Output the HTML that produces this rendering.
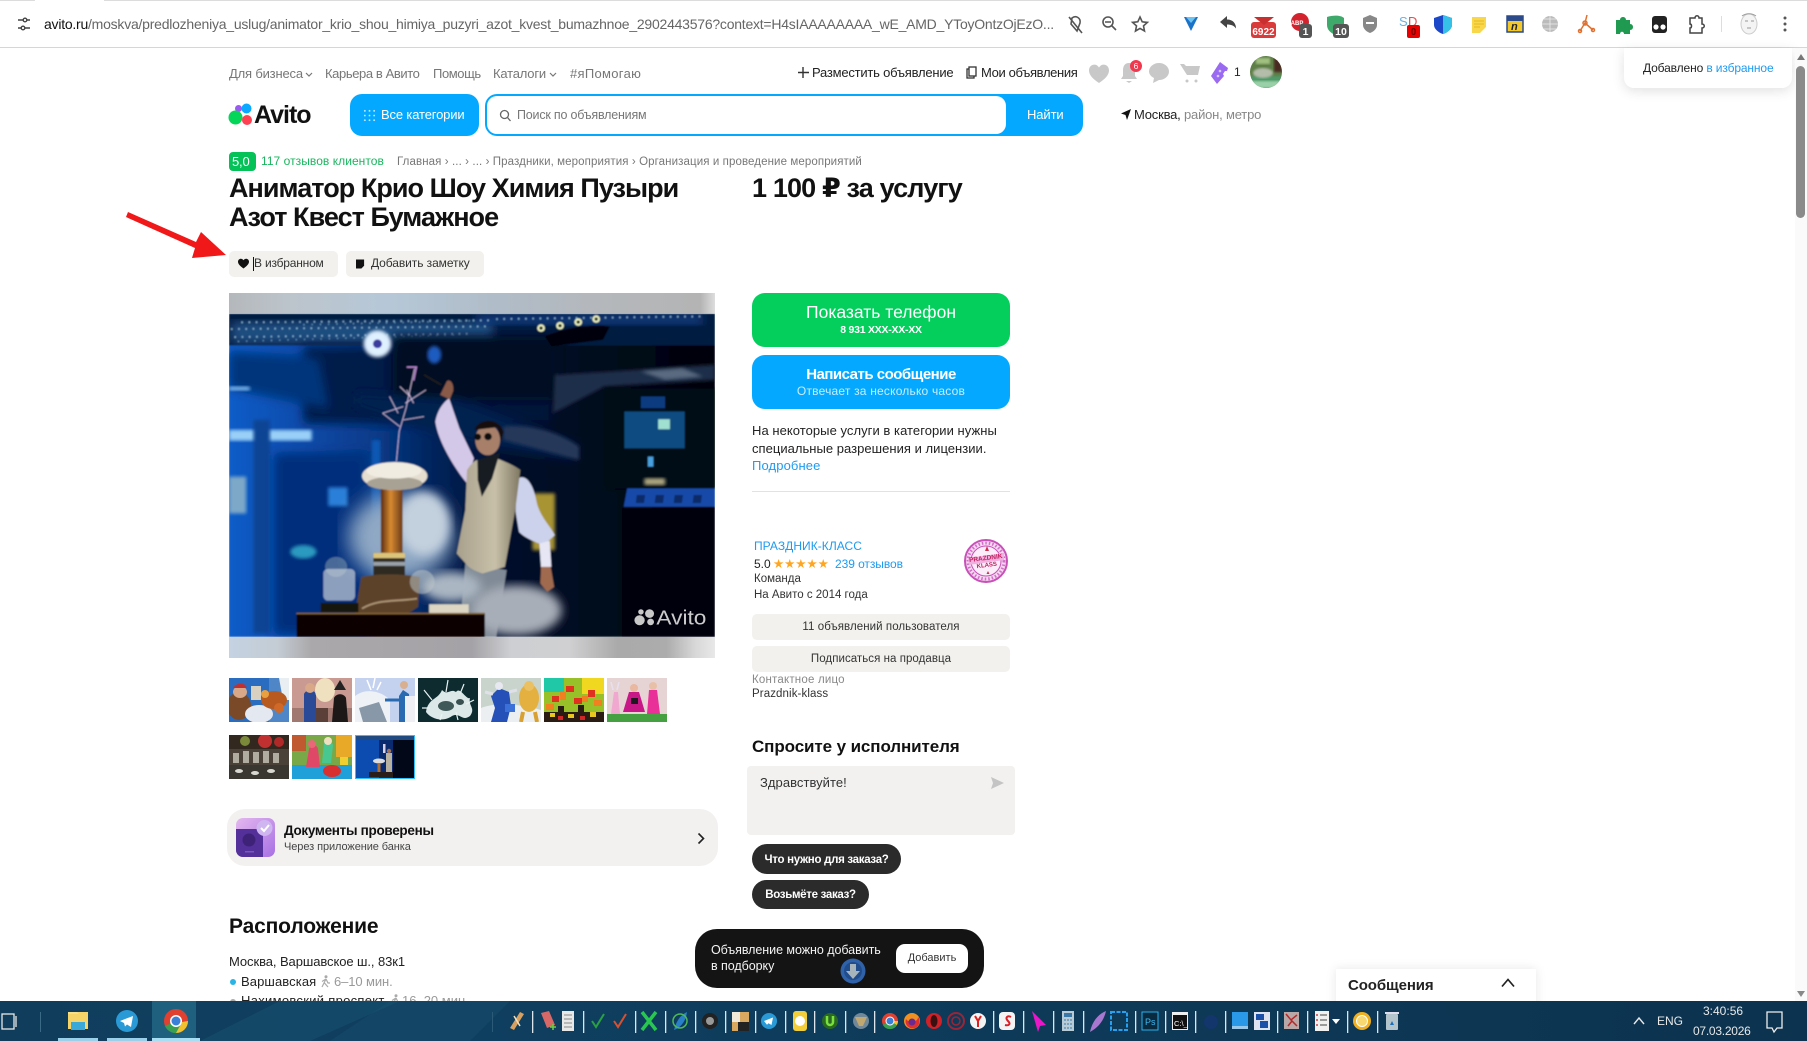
<!DOCTYPE html>
<html lang="ru"><head><meta charset="utf-8"><title>Аниматор Крио Шоу</title>
<style>
html,body{margin:0;padding:0;background:#fff}
body{width:1807px;height:1041px;position:relative;overflow:hidden;font-family:"Liberation Sans","DejaVu Sans",sans-serif;color:#222}
.t{position:absolute;white-space:nowrap;line-height:20px;font-size:13px}
.b{position:absolute}
.g{color:#777}
.lnk{color:#1e9bf0}
svg{position:absolute;overflow:visible}
.th{position:absolute;width:60px;height:44px;overflow:hidden}
</style></head><body>

<!-- browser chrome -->
<div class="b" style="left:0;top:0;width:1807px;height:47px;background:#fff;border-bottom:1px solid #d6d6d6"></div>
<div class="b" style="left:0;top:0;width:1807px;height:1px;background:#dcdcdc"></div>
<div class="b" style="left:35px;top:0;width:69px;height:1px;background:#fff"></div>
<div class="t" style="left:44px;top:14px;font-size:14px;color:#666;letter-spacing:-.235px"><span style="color:#111">avito.ru</span>/moskva/predlozheniya_uslug/animator_krio_shou_himiya_puzyri_azot_kvest_bumazhnoe_2902443576?context=H4sIAAAAAAAA_wE_AMD_YToyOntzOjEzO...</div>
<svg style="left:0;top:0" width="1807" height="48" viewBox="0 0 1807 48">
 <g stroke="#444" stroke-width="1.400" fill="none"><path d="M18 20h5M27 20h3M18 28h3M25 28h5"/><circle cx="25" cy="20" r="1.800"/><circle cx="23" cy="28" r="1.800"/></g>
 <g stroke="#555" stroke-width="1.600" fill="none"><path d="M1072 18c4-3 9 0 8 5l-3 8-6-7zM1069 17l13 16"/><circle cx="1108" cy="22" r="5"/><path d="M1112 26l4 4M1105 22h6"/><path d="M1140 17l2.200 4.800 5.200.6-3.900 3.500 1 5.100-4.500-2.600-4.500 2.600 1-5.100-3.900-3.500 5.200-.6z"/></g>
 <path d="M1184 17h14l-7 14z" fill="#1a73c8"/><path d="M1186 17h10l-5 6z" fill="#6cc3ef"/>
 <path d="M1220 22l7-6v3.500c6 0 9 4 9 9-2-3-5-4-9-4v3.500z" fill="#444"/>
 <rect x="1251" y="22" width="25" height="16" rx="3" fill="#d93a3a"/><path d="M1254 17h20l-10 8z" fill="#c83030"/>
 <text x="1263.500" y="35" font-size="10" font-weight="bold" fill="#fff" text-anchor="middle" font-family="Liberation Sans">6922</text>
 <circle cx="1300" cy="22" r="9" fill="#d2232f"/><text x="1297" y="25" font-size="6" font-weight="bold" fill="#fff" text-anchor="middle" font-family="Liberation Sans">ABP</text><rect x="1299" y="24" width="13" height="14" rx="3" fill="#555"/>
 <text x="1305.500" y="35" font-size="10.500" font-weight="bold" fill="#fff" text-anchor="middle" font-family="Liberation Sans">1</text>
 <path d="M1327 17c6-2 14-2 17 1v8c0 5-6 8-9 9-4-2-8-5-8-10z" fill="#3fa96b"/><rect x="1333" y="24" width="16" height="14" rx="3" fill="#555"/>
 <text x="1341" y="35" font-size="10.500" font-weight="bold" fill="#fff" text-anchor="middle" font-family="Liberation Sans">10</text>
 <path d="M1370 15l7 3v7c0 4-4 7-7 8-3-1-7-4-7-8v-7z" fill="#888"/><rect x="1366" y="22" width="8" height="2" fill="#fff"/>
 <text x="1399" y="26" font-size="13" fill="#6bb0df" font-family="Liberation Sans">S</text><text x="1408" y="26" font-size="13" fill="#e05050" font-family="Liberation Sans">D</text><rect x="1407" y="25" width="13" height="13" rx="2" fill="#e80000"/>
 <text x="1413.500" y="35" font-size="10" font-weight="bold" fill="#600" text-anchor="middle" font-family="Liberation Sans">0</text>
 <path d="M1443 15l9 3v7c0 4-5 8-9 9-4-1-9-5-9-9v-7z" fill="#1a48c8"/><path d="M1443 15l9 3v7c0 4-5 8-9 9z" fill="#35c0e8"/>
 <path d="M1472 17h14v10l-6 6h-8z" fill="#f8d84a"/><path d="M1474 21h10M1474 24h10M1474 27h6" stroke="#e8b820"/>
 <rect x="1507" y="16" width="16" height="16" fill="#f2c82a" stroke="#2c4a8a" stroke-width="1.500"/><rect x="1507" y="16" width="16" height="5" fill="#2c4a8a"/><text x="1511" y="30" font-size="11" font-style="italic" font-weight="bold" fill="#223" font-family="Liberation Sans">n</text>
 <circle cx="1550" cy="24" r="8" fill="#bbb"/><path d="M1542 24h16M1550 16v16M1544 19h12M1544 29h12" stroke="#eee" stroke-width=".8"/>
 <g stroke="#e07030" stroke-width="1.500" fill="none"><path d="M1587 15l-2 8-5 8M1585 23l8 7"/><circle cx="1585" cy="23" r="2"/><circle cx="1580" cy="31" r="1.500"/><circle cx="1593" cy="30" r="1.500"/></g>
 <path d="M1616 20h4c0-4 6-4 6 0h4v4c4 0 4 6 0 6v4h-6c0-3-4-3-4 0h-4z" fill="#1f9a50"/>
 <rect x="1652" y="16" width="15" height="17" rx="3" fill="#222"/><circle cx="1656" cy="27" r="2.600" fill="#fff"/><circle cx="1663" cy="27" r="2.600" fill="#fff"/>
 <path d="M1690 18h5c0-3 4-3 4 0h3v6c3 0 3 4 0 4v5h-12v-5c2 0 2-4 0-4z" fill="none" stroke="#444" stroke-width="1.500"/>
 <rect x="1721" y="16" width="1" height="16" fill="#ddd"/>
 <ellipse cx="1749" cy="24" rx="8" ry="10" fill="#f4f4f4" stroke="#ccc"/><path d="M1745 21h3M1751 21h3M1747 28h4M1742 16c4-3 10-3 14 0" stroke="#999" fill="none"/>
 <g fill="#555"><circle cx="1785" cy="18" r="1.500"/><circle cx="1785" cy="24" r="1.500"/><circle cx="1785" cy="30" r="1.500"/></g>
</svg>

<!-- top nav -->
<div class="t g" style="left:229px;top:64px;letter-spacing:-.18px">Для бизнеса</div>
<div class="t g" style="left:325px;top:64px;letter-spacing:-.4px">Карьера в Авито</div>
<div class="t g" style="left:433px;top:64px;letter-spacing:-.4px">Помощь</div>
<div class="t g" style="left:493px;top:64px;letter-spacing:-.2px">Каталоги</div>
<div class="t g" style="left:570px;top:64px;letter-spacing:.3px">#яПомогаю</div>
<div class="t" style="left:812px;top:63px;letter-spacing:-.22px">Разместить объявление</div>
<div class="t" style="left:981px;top:63px;letter-spacing:-.35px">Мои объявления</div>
<svg style="left:0;top:48px" width="1807" height="60" viewBox="0 48 1807 60">
 <path d="M306 73l3 3 3-3M550 73l3 3 3-3" stroke="#777" fill="none" stroke-width="1.200"/>
 <path d="M803 67v11M798 72.500h11" stroke="#333" stroke-width="1.400"/>
 <rect x="967" y="69" width="7" height="9" fill="none" stroke="#333" stroke-width="1.300"/><rect x="969" y="67" width="7" height="9" fill="#fff" stroke="#333" stroke-width="1.300"/>
 <path d="M1099 83c-6-4-10-8-10-12.500 0-6 7-8 10-3 3-5 10-3 10 3 0 4.500-4 8.500-10 12.500z" fill="#c8c8c8"/>
 <path d="M1129 63c4 0 6 3 6 7v6l2 3h-16l2-3v-6c0-4 2-7 6-7zM1126 81h6l-3 2z" fill="#c8c8c8"/><circle cx="1136" cy="66" r="6" fill="#f0384e"/>
 <text x="1136" y="69" font-size="8.500" fill="#fff" text-anchor="middle" font-family="Liberation Sans">6</text>
 <path d="M1159 63c5.500 0 10 3.800 10 8.500s-4.500 8.500-10 8.500l-6 3 1-5c-3-1.500-5-4-5-6.500 0-4.700 4.500-8.500 10-8.500z" fill="#c8c8c8"/>
 <path d="M1180 64h4l2 2h14l-2 9h-11z" fill="#c8c8c8"/><circle cx="1187" cy="81" r="1.500" fill="#c8c8c8"/><circle cx="1196" cy="81" r="1.500" fill="#c8c8c8"/>
 <path d="M1211 76l9-14 8 6-1 3-2 0-2 3 1 2-7 8z" fill="#9a6af0"/><circle cx="1220" cy="71" r="1.300" fill="#d8c8ff"/><circle cx="1218" cy="76" r="1.300" fill="#d8c8ff"/>
</svg>
<div class="t" style="left:1234px;top:62px;font-size:12px">1</div>
<svg style="left:1250px;top:56px" width="32" height="32" viewBox="0 0 32 32"><defs><clipPath id="av"><circle cx="16" cy="16" r="16"/></clipPath><filter id="bl1"><feGaussianBlur stdDeviation="1"/></filter></defs><g clip-path="url(#av)"><rect width="32" height="32" fill="#5e7f48"/><rect x="0" y="20" width="32" height="12" fill="#4f9a68" filter="url(#bl1)"/><ellipse cx="13" cy="17" rx="10" ry="5" fill="#b4bcaa" filter="url(#bl1)"/><rect x="24" y="0" width="8" height="16" fill="#4a2c22" filter="url(#bl1)"/><rect x="0" y="25" width="32" height="7" fill="#9ad0a8" filter="url(#bl1)"/><rect x="6" y="2" width="14" height="6" fill="#a0c080" filter="url(#bl1)"/></g></svg>

<!-- tooltip -->
<div class="b" style="left:1624px;top:48px;width:168px;height:40px;background:#fff;border-radius:0 0 10px 10px;box-shadow:0 3px 12px rgba(0,0,0,.12)"></div>
<div class="t" style="left:1643px;top:58px;font-size:12px;letter-spacing:-.13px">Добавлено <span class="lnk">в избранное</span></div>

<!-- scrollbar -->
<div class="b" style="left:1795px;top:48px;width:12px;height:953px;background:#fafafa"></div>
<div class="b" style="left:1796px;top:66px;width:9px;height:152px;background:#8a8a8a;border-radius:5px"></div>
<svg style="left:1795px;top:48px" width="12" height="953" viewBox="0 0 12 953"><path d="M6 6l4 6H2z" fill="#777"/><path d="M6 949l4-6H2z" fill="#888"/></svg>

<!-- logo + search -->
<svg style="left:229px;top:103px" width="26" height="24" viewBox="229 103 26 24"><circle cx="238.500" cy="108.500" r="3.500" fill="#9a5cf0"/><circle cx="246.500" cy="108.500" r="5" fill="#0aa8ff"/><circle cx="235.500" cy="117.500" r="7" fill="#04d65a"/><circle cx="247" cy="120" r="5" fill="#ff4053"/></svg>
<div class="t" style="left:254px;top:105px;font-size:25px;font-weight:bold;color:#111;letter-spacing:-1px">Avito</div>
<div class="b" style="left:350px;top:94px;width:129px;height:42px;background:#04a9ff;border-radius:12px"></div>
<svg style="left:363px;top:109px" width="13" height="13" viewBox="0 0 14 14"><g fill="#bfe8ff"><circle cx="2" cy="2" r="1"/><circle cx="7" cy="2" r="1"/><circle cx="12" cy="2" r="1"/><circle cx="2" cy="7" r="1"/><circle cx="7" cy="7" r="1"/><circle cx="12" cy="7" r="1"/><circle cx="2" cy="12" r="1"/><circle cx="7" cy="12" r="1"/><circle cx="12" cy="12" r="1"/></g></svg>
<div class="t" style="left:381px;top:105px;color:#fff;letter-spacing:-.15px">Все категории</div>
<div class="b" style="left:485px;top:94px;width:598px;height:42px;background:#04a9ff;border-radius:12px"></div>
<div class="b" style="left:487px;top:96px;width:519px;height:38px;background:#fff;border-radius:10px"></div>
<svg style="left:499px;top:109px" width="12" height="13" viewBox="0 0 12 13"><circle cx="5.500" cy="5.500" r="4" stroke="#666" stroke-width="1.300" fill="none"/><path d="M8.500 8.500l3 3.500" stroke="#666" stroke-width="1.300"/></svg>
<div class="t g" style="left:517px;top:105px;letter-spacing:-.2px;font-size:12.500px">Поиск по объявлениям</div>
<div class="t" style="left:1027px;top:105px;color:#fff;letter-spacing:-.1px">Найти</div>
<svg style="left:1121px;top:109px" width="10" height="11" viewBox="0 0 10 11"><path d="M10 0L0 4.500l4.500 1.500L6 11z" fill="#111"/></svg>
<div class="t" style="left:1134px;top:105px;color:#888;letter-spacing:-.2px"><span style="color:#222">Москва,</span> район, метро</div>

<!-- rating + breadcrumbs -->
<div class="b" style="left:229px;top:152px;width:27px;height:19px;background:#04c258;border-radius:4px"></div>
<div class="t" style="left:232px;top:152px;color:#fff;font-size:13px;letter-spacing:-.2px">5,0</div>
<div class="t" style="left:261px;top:151px;color:#1bb45f;font-size:12px;letter-spacing:.05px">117 отзывов клиентов</div>
<div class="t" style="left:397px;top:152px;color:#777;font-size:11.500px;letter-spacing:.1px">Главная › ... › ... › Праздники, мероприятия › Организация и проведение мероприятий</div>

<!-- title -->
<div class="t" style="left:229px;top:178px;font-size:27px;font-weight:bold;color:#111;letter-spacing:-.95px">Аниматор Крио Шоу Химия Пузыри</div>
<div class="t" style="left:229px;top:207px;font-size:27px;font-weight:bold;color:#111;letter-spacing:-.95px">Азот Квест Бумажное</div>
<div class="t" style="left:752px;top:178px;font-size:27px;font-weight:bold;color:#111;letter-spacing:-.85px">1 100 ₽ за услугу</div>

<!-- red arrow -->
<svg style="left:120px;top:205px" width="120" height="60" viewBox="120 205 120 60"><path d="M128 212l68 30 5-10 25 23-34 3 3-10-69-31z" fill="#f01818"/></svg>

<!-- fav / note -->
<div class="b" style="left:229px;top:251px;width:109px;height:26px;background:#f2f1ed;border-radius:5px"></div>
<div class="b" style="left:346px;top:251px;width:138px;height:26px;background:#f2f1ed;border-radius:5px"></div>
<svg style="left:238px;top:258px" width="11" height="11" viewBox="0 0 12 12"><path d="M6 11.500C2 8.500 0 6.500 0 4c0-3 4-4.500 6-1.500C8-.5 12 1 12 4c0 2.500-2 4.500-6 7.500z" fill="#111"/></svg>
<div class="b" style="left:253px;top:257px;width:1px;height:14px;background:#111"></div>
<div class="t" style="left:254px;top:253px;font-size:12px;color:#333;letter-spacing:-.2px">В избранном</div>
<svg style="left:356px;top:258px" width="9" height="11" viewBox="0 0 10 11"><path d="M0 1h9v7l-3 3H0z" fill="#111"/></svg>
<div class="t" style="left:371px;top:253px;font-size:12px;color:#333;letter-spacing:-.08px">Добавить заметку</div>

<!-- main photo -->
<svg style="left:229px;top:293px" width="486" height="365" viewBox="84 40 1411 1093" preserveAspectRatio="none">
<defs>
 <linearGradient id="tb" x1="0" x2="1"><stop offset="0" stop-color="#b4b8bb"/><stop offset=".12" stop-color="#bcc4cb"/><stop offset=".32" stop-color="#b6c8d8"/><stop offset=".55" stop-color="#b0bcc8"/><stop offset=".75" stop-color="#b4b8bc"/><stop offset=".97" stop-color="#b4b4b4"/><stop offset="1" stop-color="#ddd"/></linearGradient>
 <linearGradient id="bb" x1="0" x2="1"><stop offset="0" stop-color="#c4d2e2"/><stop offset=".1" stop-color="#c4ccd4"/><stop offset=".17" stop-color="#aaa8aa"/><stop offset=".5" stop-color="#a4a2a6"/><stop offset=".58" stop-color="#cdcfd2"/><stop offset=".7" stop-color="#d0d0d2"/><stop offset=".8" stop-color="#aaaaaa"/><stop offset=".9" stop-color="#acacac"/><stop offset=".96" stop-color="#d8d8d8"/><stop offset="1" stop-color="#e8e8e8"/></linearGradient>
 <linearGradient id="pb" x1="0" x2="1"><stop offset="0" stop-color="#0a5cc8"/><stop offset=".16" stop-color="#0a4aa8"/><stop offset=".3" stop-color="#073a88"/><stop offset=".42" stop-color="#04245c"/><stop offset=".58" stop-color="#020e2a"/><stop offset="1" stop-color="#01030a"/></linearGradient>
 <linearGradient id="col" x1="0" x2="1"><stop offset="0" stop-color="#5a2c10"/><stop offset=".45" stop-color="#d88a30"/><stop offset="1" stop-color="#6a3a18"/></linearGradient>
 <linearGradient id="vest" x1="0" x2="1"><stop offset="0" stop-color="#a8a08c"/><stop offset=".6" stop-color="#c8c0a8"/><stop offset="1" stop-color="#7f7862"/></linearGradient>
 <filter id="f4"><feGaussianBlur stdDeviation="5"/></filter>
 <filter id="f12"><feGaussianBlur stdDeviation="14"/></filter>
 <filter id="f30"><feGaussianBlur stdDeviation="30"/></filter>
 <filter id="f2"><feGaussianBlur stdDeviation="2.200"/></filter>
 <clipPath id="pc"><rect x="84" y="102" width="1411" height="968"/></clipPath>
</defs>
<rect x="84" y="40" width="1411" height="62" fill="url(#tb)"/>
<rect x="84" y="1070" width="1411" height="63" fill="url(#bb)"/>
<g clip-path="url(#pc)">
 <g filter="url(#f2)">
 <rect x="84" y="102" width="1411" height="968" fill="url(#pb)"/>
 <!-- ceiling -->
 <rect x="84" y="102" width="1411" height="95" fill="#041a40"/>
 <rect x="90" y="125" width="760" height="65" fill="#1b4d80" filter="url(#f12)"/>
 <rect x="800" y="105" width="660" height="30" fill="#0c3e80" filter="url(#f12)"/>
 <path d="M90 148l740-8M100 172l680-10M120 128l720-6M860 118l600-8" stroke="#8fc0e0" stroke-width="5" stroke-dasharray="4 17"/>
 <path d="M110 185l640-20M300 135l500-12" stroke="#6fa8d0" stroke-width="4" stroke-dasharray="3 21"/>
 <!-- dark soffit -->
 <rect x="300" y="200" width="720" height="230" fill="#03183c" opacity=".85" filter="url(#f12)"/>
 <path d="M84 215l260 20 30 150-290-60z" fill="#05357c" filter="url(#f12)"/>
 <rect x="560" y="170" width="480" height="190" fill="#020d24" filter="url(#f12)"/>
 <path d="M450 340l300 20 340 130v50l-300-50-340-110z" fill="#04224f" filter="url(#f12)"/>
 <!-- ceiling lights -->
 <circle cx="515" cy="192" r="40" fill="#dff0ff" filter="url(#f4)"/><circle cx="515" cy="192" r="13" fill="#3a3aa0"/>
 <g fill="#eef4c0"><circle cx="990" cy="145" r="11"/><circle cx="1045" cy="138" r="11"/><circle cx="1098" cy="127" r="11"/><circle cx="1150" cy="118" r="11"/></g>
 <g fill="#101010"><circle cx="990" cy="145" r="5"/><circle cx="1045" cy="138" r="5"/><circle cx="1098" cy="127" r="5"/><circle cx="1150" cy="118" r="5"/></g>
 <path d="M1000 170c40-20 130-40 190-30l-20 40-150 20z" fill="#020610"/>
 <ellipse cx="680" cy="225" rx="20" ry="26" fill="#1a5cc0" filter="url(#f4)"/>
 <!-- left room -->
 <rect x="84" y="320" width="60" height="12" fill="#7ab8f0" filter="url(#f4)"/>
 <rect x="84" y="450" width="240" height="32" fill="#9ad0f8" filter="url(#f4)"/>
 <rect x="155" y="420" width="48" height="640" fill="#0a4494" filter="url(#f4)"/>
 <rect x="215" y="520" width="270" height="540" fill="#062f7c" filter="url(#f12)"/>
 <rect x="84" y="590" width="50" height="110" fill="#7ea8c8" filter="url(#f4)"/>
 <rect x="372" y="622" width="56" height="56" fill="#2a80d8" filter="url(#f4)"/>
 <rect x="498" y="480" width="26" height="500" fill="#0c58b4" filter="url(#f4)"/>
 <ellipse cx="300" cy="815" rx="38" ry="20" fill="#2a9ac0" filter="url(#f4)"/>
 <!-- right room -->
 <path d="M1030 285l465-30v45l-320 20-150 80z" fill="#1e2e48" filter="url(#f4)"/>
 <path d="M1280 275l120-10 60 25-110 10z" fill="#5a6a80" filter="url(#f4)"/>
 <rect x="1170" y="325" width="325" height="300" fill="#040a18" filter="url(#f4)"/>
 <rect x="1232" y="395" width="175" height="110" fill="#0e4c80"/>
 <rect x="1330" y="418" width="34" height="30" fill="#a0e0d0"/>
 <rect x="1280" y="350" width="70" height="35" fill="#0c3a80"/>
 <rect x="1290" y="595" width="60" height="20" fill="#b0a880" filter="url(#f4)"/>
 <rect x="1300" y="530" width="16" height="30" fill="#4aa0e0"/>
 <path d="M1240 625h255v55h-265z" fill="#1749a8"/>
 <path d="M1268 645h24l-3 24h-24zM1323 645h24l-3 24h-24zM1378 645h24l-3 24h-24zM1433 645h24l-3 24h-24z" fill="#0c2a68"/>
 <rect x="1225" y="685" width="270" height="385" fill="#01030a"/>
 <path d="M880 440c100-10 180 30 220 60v40l-220-60z" fill="#26385a" filter="url(#f4)"/>
 <rect x="965" y="640" width="65" height="170" fill="#a89430" filter="url(#f4)"/>
 <!-- trousers behind smoke -->
 <path d="M770 850l120 20-30 200h-60l-40-100z" fill="#7f8a96"/>
 <!-- smoke -->
 <ellipse cx="580" cy="770" rx="150" ry="130" fill="#8fa8c4" filter="url(#f30)"/>
 <ellipse cx="650" cy="730" rx="75" ry="95" fill="#c3d0de" filter="url(#f12)"/>
 <ellipse cx="920" cy="990" rx="130" ry="75" fill="#a8aeb8" filter="url(#f12)"/>
 <ellipse cx="730" cy="920" rx="85" ry="45" fill="#aab6c2" filter="url(#f12)"/>
 <!-- tesla coil -->
 <rect x="525" y="625" width="63" height="195" fill="url(#col)"/>
 <ellipse cx="565" cy="588" rx="95" ry="42" fill="#e4ddd0"/><ellipse cx="565" cy="610" rx="80" ry="20" fill="#a8a294"/><ellipse cx="563" cy="572" rx="80" ry="24" fill="#f1ece2"/>
 <rect x="503" y="818" width="92" height="70" fill="#2e2a20"/><rect x="503" y="818" width="92" height="16" fill="#dcc47a"/><rect x="503" y="845" width="92" height="12" fill="#9aa0a8"/>
 <path d="M468 890c50-10 110-10 170 0l-5 90-30 20H450z" fill="#5d432c"/>
 <path d="M470 985c50-30 100-20 160-30" stroke="#b09878" stroke-width="5" fill="none"/>
 <ellipse cx="395" cy="860" rx="32" ry="30" fill="#7892ac" opacity=".6"/><rect x="358" y="866" width="92" height="95" rx="14" fill="#c8d0d8" opacity=".7"/>
 <circle cx="645" cy="905" r="36" fill="#bcc4c8" opacity=".55"/>
 <rect x="350" y="968" width="110" height="28" fill="#181410"/>
 <rect x="280" y="998" width="547" height="72" fill="#0a0606"/><path d="M280 1000h547" stroke="#906a38" stroke-width="4"/>
 <rect x="665" y="972" width="115" height="26" fill="#dcd6c2"/>
 <!-- man -->
 <path d="M683 425c5-30 20-55 40-70l30 90 42 90-20 75c-40-50-85-130-92-185z" fill="#d4c8e8"/>
 <path d="M697 345l20-42c10-5 20 8 18 30l-10 25z" fill="#8a5a48"/>
 <path d="M650 285l50 30" stroke="#221c1c" stroke-width="5"/>
 <path d="M918 600c25-25 50 10 60 70 10 40 40 70 52 95l-32 30c-30-10-60-25-72-40l-10-60z" fill="#ccd2ec"/>
 <path d="M985 790l30-8 5 78-30 2z" fill="#e6e6f4"/>
 <path d="M990 860h28l10 60-20 15-20-25z" fill="#a06a50"/>
 <path d="M775 570c10-15 20-28 30-30l55-5c25 10 50 20 70 35l-15 120-30 170-65 20c-15-5-30-12-40-20l-35-40 25-130z" fill="url(#vest)"/>
 <path d="M805 540l65-20-22 75-30 55-12-50z" fill="#151a22"/>
 <ellipse cx="835" cy="480" rx="36" ry="46" fill="#a8806a"/>
 <path d="M797 450c8-34 72-40 84 6l-6 30-12-44z" fill="#12100e"/>
 <circle cx="806" cy="471" r="10" fill="#0a0a10"/><circle cx="836" cy="470" r="11" fill="#0a0a10"/>
 <!-- lightning -->
 <g stroke="#e8d2f4" stroke-width="2" fill="none"><path d="M570 545l8-90 20-70 25-120M590 380l-60 20M596 370l60-40M580 440l-50-40M590 420l60-10M600 330l20 40M575 400l-25-50M610 350l-30-30"/></g>
 <path d="M600 262h28l-8 40" stroke="#c890e0" stroke-width="3.500" fill="none"/>
 </g>
 <!-- watermark -->
 <circle cx="1276" cy="1020" r="15" fill="#c8c8c8"/><circle cx="1305" cy="1000" r="13" fill="#c8c8c8"/><circle cx="1280" cy="995" r="8" fill="#c8c8c8"/><circle cx="1308" cy="1025" r="10" fill="#c8c8c8"/>
</g>
<text x="1325" y="1033" font-size="62" fill="#cbcbcb" font-family="Liberation Sans" textLength="145" lengthAdjust="spacingAndGlyphs">Avito</text>
</svg>

<!-- thumbs -->
<svg class="th" style="left:229px;top:678px" width="60" height="44" viewBox="0 0 60 44"><rect width="60" height="44" fill="#2a6cc0"/><rect x="40" width="20" height="44" fill="#4f86c8"/><path d="M50 0h10v22h-6z" fill="#e8eef2"/><ellipse cx="10" cy="28" rx="12" ry="14" fill="#7a4a28"/><ellipse cx="11" cy="14" rx="7" ry="6" fill="#d8a888"/><path d="M4 10c4-6 12-6 14 0z" fill="#c03030"/><ellipse cx="30" cy="36" rx="14" ry="9" fill="#e4e8f0"/><ellipse cx="45" cy="22" rx="13" ry="9" fill="#b85a20"/><circle cx="36" cy="16" r="4" fill="#e8a040"/><circle cx="50" cy="30" r="5" fill="#d06828"/><path d="M22 8h10v14H22z" fill="#d8d0c0"/></svg>
<svg class="th" style="left:292px;top:678px" width="60" height="44" viewBox="0 0 60 44"><rect width="60" height="44" fill="#c89a92"/><rect y="30" width="60" height="14" fill="#a07870"/><path d="M12 44V16c2-5 10-5 12 0v28z" fill="#2a4a98"/><circle cx="18" cy="10" r="5" fill="#d8a888"/><ellipse cx="33" cy="12" rx="10" ry="12" fill="#efe0c0"/><path d="M40 44l2-24c2-5 10-5 12 0l2 24z" fill="#1c1818"/><path d="M42 12l6-10 6 10z" fill="#222"/><rect x="24" y="30" width="12" height="14" fill="#5a4038"/></svg>
<svg class="th" style="left:355px;top:678px" width="60" height="44" viewBox="0 0 60 44"><rect width="60" height="44" fill="#c4d2f0"/><path d="M0 18c10-8 25-6 35 4v22H0z" fill="#eef2f6"/><path d="M4 30l20-6 8 20H8z" fill="#8898a8"/><path d="M44 44V18l4-6 6 4 2 28z" fill="#2a6ab0"/><circle cx="49" cy="7" r="4" fill="#d8b090"/><path d="M50 18h10v26H50z" fill="#f0f0f4"/><path d="M30 22h14" stroke="#2a6ab0" stroke-width="3"/><path d="M12 2l4 10M20 0l-2 10M26 4l-4 8" stroke="#fff" stroke-width="1.500"/></svg>
<svg class="th" style="left:418px;top:678px" width="60" height="44" viewBox="0 0 60 44"><rect width="60" height="44" fill="#0e2c30"/><path d="M8 34c2-14 12-12 16-22 6 6 8-2 14 2 4-6 10 8 14 6-2 8 6 10 0 18-8 6-10-4-18 0-8 6-20 4-26-4z" fill="#dce8e8"/><g stroke="#eaf2f2" stroke-width="1.200"><path d="M6 12l8 10M30 2l-2 12M46 6l-4 10M56 22l-8 4M4 30l8 0M22 42l2-6M40 42l-2-8"/></g><ellipse cx="28" cy="28" rx="8" ry="5" fill="#405858"/><ellipse cx="42" cy="24" rx="4" ry="3" fill="#385050"/></svg>
<svg class="th" style="left:481px;top:678px" width="60" height="44" viewBox="0 0 60 44"><rect width="60" height="44" fill="#c8d4cc"/><path d="M0 30c15-6 40-4 60 2v12H0z" fill="#eceff2"/><path d="M10 44l4-14-4-12 8-8 10 4 2 14-4 16z" fill="#2450b8"/><circle cx="18" cy="8" r="4" fill="#e8e8f0"/><path d="M4 14l8 2M28 14l8-2" stroke="#e0e0e8" stroke-width="3"/><ellipse cx="48" cy="20" rx="10" ry="14" fill="#e4b040"/><circle cx="48" cy="8" r="5" fill="#eac060"/><path d="M42 34l-2 10M54 34l2 10" stroke="#d8a030" stroke-width="4"/><path d="M24 26h10v8H24z" fill="#3a70d8"/></svg>
<svg class="th" style="left:544px;top:678px" width="60" height="44" viewBox="0 0 60 44"><rect width="60" height="44" fill="#98c028"/><rect width="20" height="14" fill="#20c8a8"/><rect x="38" width="22" height="16" fill="#f0d820"/><g fill="#e03020"><rect x="22" y="8" width="8" height="6"/><rect x="44" y="12" width="7" height="7"/><rect x="8" y="18" width="7" height="6"/><rect x="30" y="20" width="8" height="6"/></g><g fill="#f08020"><rect x="16" y="14" width="6" height="8"/><rect x="38" y="18" width="6" height="6"/><rect x="50" y="22" width="8" height="6"/><rect x="2" y="26" width="8" height="6"/></g><g fill="#2a1c12"><rect x="0" y="34" width="60" height="10"/><rect x="14" y="28" width="6" height="7"/><rect x="34" y="27" width="6" height="8"/></g><g fill="#e8c820"><rect x="6" y="35" width="5" height="4"/><rect x="24" y="36" width="6" height="4"/><rect x="46" y="34" width="6" height="5"/></g><g fill="#d02828"><rect x="14" y="38" width="5" height="4"/><rect x="36" y="38" width="5" height="4"/></g></svg>
<svg class="th" style="left:607px;top:678px" width="60" height="44" viewBox="0 0 60 44"><rect width="60" height="44" fill="#e6d4d4"/><rect y="36" width="60" height="8" fill="#44a040"/><path d="M16 34l6-20h10l6 20z" fill="#c81888"/><circle cx="27" cy="10" r="4" fill="#e8b8a0"/><rect x="24" y="20" width="7" height="6" fill="#201820"/><path d="M40 36l2-24h8l3 24z" fill="#e83098"/><circle cx="46" cy="8" r="4" fill="#e8c0a8"/><path d="M4 36l3-22 4 0 2 22z" fill="#f0a8d0"/><path d="M6 12l-2-8M10 12l2-8" stroke="#e8e0f0" stroke-width="1.500"/></svg>
<svg class="th" style="left:229px;top:735px" width="60" height="44" viewBox="0 0 60 44"><rect width="60" height="44" fill="#4a4238"/><rect width="60" height="14" fill="#33281f"/><circle cx="16" cy="6" r="5" fill="#7a8a3a"/><circle cx="36" cy="6" r="7" fill="#c03030"/><circle cx="50" cy="7" r="5" fill="#b02828"/><g fill="#b0aca0"><rect x="4" y="18" width="6" height="10"/><rect x="14" y="16" width="6" height="12"/><rect x="24" y="17" width="6" height="11"/><rect x="34" y="16" width="6" height="12"/><rect x="44" y="18" width="6" height="10"/></g><rect y="30" width="60" height="14" fill="#3a3630"/><g fill="#d8d8d0"><ellipse cx="10" cy="36" rx="4" ry="2"/><ellipse cx="26" cy="38" rx="4" ry="2"/><ellipse cx="42" cy="36" rx="4" ry="2"/></g></svg>
<svg class="th" style="left:292px;top:735px" width="60" height="44" viewBox="0 0 60 44"><rect width="60" height="44" fill="#78a848"/><rect y="30" width="60" height="14" fill="#20a0d8"/><rect x="44" width="16" height="22" fill="#e8a828"/><rect x="0" width="14" height="16" fill="#c05830"/><path d="M14 32l3-18c2-5 8-5 9 0l2 18z" fill="#e04868"/><circle cx="20" cy="9" r="4" fill="#e86878"/><path d="M30 28l2-20c3-4 8-2 9 2l-2 18z" fill="#48c890"/><ellipse cx="40" cy="36" rx="9" ry="6" fill="#d83030"/><circle cx="36" cy="6" r="4" fill="#f0e0c0"/><rect x="48" y="22" width="8" height="8" fill="#f0d030"/></svg>
<svg class="th" style="left:355px;top:735px" width="60" height="44" viewBox="0 0 60 44"><rect width="60" height="44" fill="#0a2a70"/><rect width="24" height="44" fill="#0c4cb0"/><rect x="38" width="22" height="44" fill="#030818"/><ellipse cx="24" cy="26" rx="6" ry="2.500" fill="#ddd"/><rect x="22.500" y="28" width="3" height="9" fill="#b07030"/><rect x="14" y="37" width="24" height="5" fill="#2a1e18"/><rect x="31" y="18" width="6" height="19" fill="#b8b0a0"/><circle cx="34" cy="16" r="2.200" fill="#a07058"/><rect x="28" y="9" width="2.500" height="9" fill="#d8d0e8"/><rect x="0" y="1" width="60" height="4" fill="#204a80"/><rect x=".5" y=".5" width="59" height="43" fill="none" stroke="#2cc0ff"/></svg>

<!-- docs card -->
<div class="b" style="left:227px;top:809px;width:491px;height:57px;background:#f2f1f0;border-radius:18px"></div>
<svg style="left:236px;top:818px" width="40" height="40" viewBox="0 0 40 40"><defs><linearGradient id="dg" x1="0" y1="0" x2="1" y2="1"><stop offset="0" stop-color="#e4b8ee"/><stop offset="1" stop-color="#a870e4"/></linearGradient></defs><rect width="39" height="39" rx="7" fill="url(#dg)"/><path d="M0 11h27v28H7a7 7 0 0 1-7-7z" fill="#53309a"/><circle cx="13" cy="22" r="6.500" fill="#3e2278"/><rect x="9" y="33" width="9" height="1.500" fill="#7a58b8"/><circle cx="28.500" cy="10" r="8" fill="#cfb6f0"/><path d="M25 10l3 3 5-6" stroke="#fff" stroke-width="2" fill="none"/></svg>
<div class="t" style="left:284px;top:821px;font-size:13.500px;font-weight:bold;color:#111;letter-spacing:-.3px">Документы проверены</div>
<div class="t" style="left:284px;top:837px;font-size:11px;color:#444;letter-spacing:-.08px">Через приложение банка</div>
<svg style="left:697px;top:832px" width="9" height="13" viewBox="0 0 9 13"><path d="M1.500 1.500l5 5-5 5" stroke="#222" stroke-width="1.600" fill="none"/></svg>

<!-- location -->
<div class="t" style="left:229px;top:917px;font-size:21px;font-weight:bold;color:#111;letter-spacing:-.15px">Расположение</div>
<div class="t" style="left:229px;top:952px;letter-spacing:-.08px">Москва, Варшавское ш., 83к1</div>
<div class="b" style="left:230px;top:979px;width:6px;height:6px;border-radius:50%;background:#28b4e4"></div>
<div class="t" style="left:241px;top:972px;letter-spacing:.1px">Варшавская</div>
<svg style="left:320px;top:975px" width="11" height="13" viewBox="0 0 11 13"><circle cx="6" cy="1.800" r="1.500" fill="#aaa"/><path d="M6 4L4 8l-2 4M6 4l2 4 2 0M6 4L2 6.500M4.500 8L8 12" stroke="#aaa" stroke-width="1.200" fill="none"/></svg>
<div class="t" style="left:334px;top:972px;color:#999;letter-spacing:-.1px">6–10 мин.</div>
<div class="b" style="left:230px;top:999px;width:6px;height:6px;border-radius:50%;background:#aaa"></div>
<div class="t" style="left:241px;top:991px;letter-spacing:.3px">Нахимовский проспект</div>
<svg style="left:390px;top:994px" width="11" height="13" viewBox="0 0 11 13"><circle cx="6" cy="1.800" r="1.500" fill="#aaa"/><path d="M6 4L4 8l-2 4M6 4l2 4 2 0M6 4L2 6.500" stroke="#aaa" stroke-width="1.200" fill="none"/></svg>
<div class="t" style="left:402px;top:991px;color:#999;">16–20 мин.</div>

<!-- right column -->
<div class="b" style="left:752px;top:293px;width:258px;height:54px;background:#04cf5c;border-radius:13px"></div>
<div class="t" style="left:752px;width:258px;text-align:center;top:302px;color:#fff;font-size:17.500px">Показать телефон</div>
<div class="t" style="left:752px;width:258px;text-align:center;top:320px;color:#fff;font-size:10.500px;font-weight:bold;letter-spacing:-.25px">8 931 XXX-XX-XX</div>
<div class="b" style="left:752px;top:355px;width:258px;height:54px;background:#04a9ff;border-radius:13px"></div>
<div class="t" style="left:752px;width:258px;text-align:center;top:365px;color:#fff;font-size:15px;font-weight:bold;letter-spacing:-.5px">Написать сообщение</div>
<div class="t" style="left:752px;width:258px;text-align:center;top:381px;color:#c6edff;font-size:12px;letter-spacing:.2px">Отвечает за несколько часов</div>
<div class="t" style="left:752px;top:421px;letter-spacing:.05px">На некоторые услуги в категории нужны</div>
<div class="t" style="left:752px;top:439px;letter-spacing:.03px">специальные разрешения и лицензии.</div>
<div class="t lnk" style="left:752px;top:456px;letter-spacing:.12px">Подробнее</div>
<div class="b" style="left:752px;top:491px;width:258px;height:1px;background:#e2e2e2"></div>
<div class="t lnk" style="left:754px;top:536px;font-size:12px;letter-spacing:.05px">ПРАЗДНИК-КЛАСС</div>
<div class="t" style="left:754px;top:554px;font-size:12px">5.0</div>
<div class="t" style="left:773px;top:554px;font-size:12.500px;color:#ffa51e;letter-spacing:-.05px">★★★★★</div>
<div class="t lnk" style="left:835px;top:554px;font-size:12px;letter-spacing:-.07px">239 отзывов</div>
<div class="t" style="left:754px;top:569px;font-size:11.500px;color:#333">Команда</div>
<div class="t" style="left:754px;top:585px;font-size:11.500px;color:#333">На Авито с 2014 года</div>
<svg style="left:964px;top:539px" width="44" height="44" viewBox="0 0 44 44"><circle cx="22" cy="22" r="21" fill="#f6d8f0" stroke="#c850b8" stroke-width="2"/><circle cx="22" cy="22" r="15" fill="#fbeefa" stroke="#c850b8" stroke-width="1"/><circle cx="22" cy="22" r="18" fill="none" stroke="#d070c8" stroke-width="3" stroke-dasharray="1.500 2"/><path d="M4 19l36-5v7L5 26z" fill="#f0b0e0"/><text x="22" y="21" font-size="6.500" font-weight="bold" fill="#c02060" text-anchor="middle" font-family="Liberation Sans" transform="rotate(-7 22 21)">PRAZDNIK</text><text x="23" y="28" font-size="6" font-weight="bold" fill="#c02060" text-anchor="middle" font-family="Liberation Sans" transform="rotate(-7 22 28)">KLASS</text><path d="M23 7l2 5h-4z" fill="#d03050"/><path d="M24 32l1.500 3h-3z" fill="#d03050"/></svg>
<div class="b" style="left:752px;top:614px;width:258px;height:26px;background:#f2f1ed;border-radius:5px"></div>
<div class="t" style="left:752px;width:258px;text-align:center;top:617px;font-size:11.500px;color:#333;letter-spacing:.07px">11 объявлений пользователя</div>
<div class="b" style="left:752px;top:646px;width:258px;height:26px;background:#f2f1ed;border-radius:5px"></div>
<div class="t" style="left:752px;width:258px;text-align:center;top:649px;font-size:11.500px;color:#333;letter-spacing:.05px">Подписаться на продавца</div>
<div class="t" style="left:752px;top:670px;font-size:11.500px;color:#888;letter-spacing:.2px">Контактное лицо</div>
<div class="t" style="left:752px;top:684px;font-size:11.500px;color:#333;letter-spacing:.1px">Prazdnik-klass</div>

<div class="t" style="left:752px;top:737px;font-size:17px;font-weight:bold;color:#111;letter-spacing:-.1px">Спросите у исполнителя</div>
<div class="b" style="left:747px;top:766px;width:268px;height:69px;background:#f2f1f0;border-radius:4px"></div>
<div class="t" style="left:760px;top:773px;font-size:13px;color:#333;letter-spacing:.05px">Здравствуйте!</div>
<svg style="left:990px;top:776px" width="14" height="14" viewBox="0 0 14 14"><path d="M1 1l13 6-13 6 2-6z" fill="#c4c4c4"/></svg>
<div class="b" style="left:752px;top:844px;width:149px;height:30px;background:#2b2b2b;border-radius:15px"></div>
<div class="t" style="left:752px;width:149px;text-align:center;top:850px;font-size:11.500px;color:#fff;letter-spacing:-.3px;font-weight:bold">Что нужно для заказа?</div>
<div class="b" style="left:752px;top:880px;width:117px;height:29px;background:#2b2b2b;border-radius:15px"></div>
<div class="t" style="left:752px;width:117px;text-align:center;top:885px;font-size:11.500px;color:#fff;letter-spacing:-.3px;font-weight:bold">Возьмёте заказ?</div>

<!-- dark popup -->
<div class="b" style="left:695px;top:929px;width:289px;height:59px;background:#141414;border-radius:22px"></div>
<div class="t" style="left:711px;top:940px;font-size:12.500px;color:#f4f4f4;letter-spacing:-.05px">Объявление можно добавить</div>
<div class="t" style="left:711px;top:956px;font-size:12.500px;color:#f4f4f4;letter-spacing:-.05px">в подборку</div>
<div class="b" style="left:896px;top:944px;width:72px;height:29px;background:#fff;border-radius:9px"></div>
<div class="t" style="left:896px;width:72px;text-align:center;top:948px;font-size:11px;color:#333">Добавить</div>
<svg style="left:840px;top:958px" width="26" height="26" viewBox="0 0 26 26"><circle cx="13" cy="13" r="12.500" fill="#2f62a8"/><circle cx="13" cy="13" r="9" fill="#204c8c"/><path d="M10 6h6v7h4l-7 8-7-8h4z" fill="#a8b4bc"/></svg>

<!-- messages -->
<div class="b" style="left:1336px;top:969px;width:200px;height:40px;background:#fff;box-shadow:0 0 10px rgba(0,0,0,.1)"></div>
<div class="t" style="left:1348px;top:976px;font-size:15px;font-weight:bold;color:#222;letter-spacing:-.1px">Сообщения</div>
<svg style="left:1501px;top:978px" width="14" height="10" viewBox="0 0 14 10"><path d="M1 8.500l6-7 6 7" stroke="#222" stroke-width="1.700" fill="none"/></svg>

<!-- taskbar -->
<div class="b" style="left:0;top:1001px;width:1807px;height:40px;background:linear-gradient(90deg,#103d5c,#0f3f60 25%,#0e3b5a 50%,#0c334f 100%)"></div>
<svg style="left:0;top:1001px" width="1807" height="40" viewBox="0 1001 1807 40">
 <path d="M200 1041l80-40h120l-90 40z" fill="#15506e" opacity=".6"/>
 <path d="M330 1041l60-40h120l-40 40z" fill="#1a5270" opacity=".4"/>
 <rect x="152" y="1001" width="44" height="37" fill="#20607f"/>
 <rect x="58" y="1038" width="40" height="3" fill="#9ad0ea"/><rect x="107" y="1038" width="40" height="3" fill="#9ad0ea"/><rect x="152" y="1038" width="48" height="3" fill="#a8def4"/>
 <rect x="2" y="1014" width="12" height="15" fill="none" stroke="#e8e8e8" stroke-width="1.300"/><path d="M16 1016v11" stroke="#e8e8e8" stroke-width="1.300"/>
 <rect x="40" y="1012" width="1" height="20" fill="#3a6a86"/>
 <rect x="68" y="1012" width="20" height="17" fill="#f6d468"/><path d="M68 1012h9l2 2h-11z" fill="#f8e088"/><rect x="71" y="1022" width="14" height="8" fill="#3aa8d8"/>
 <circle cx="127" cy="1021" r="11" fill="#2a9ad6"/><path d="M120 1021l13-5-2 11-4-2.500-2 2-1-3.500z" fill="#fff"/>
 <circle cx="176" cy="1021" r="12" fill="#e04030"/><path d="M176 1021l10.400 6A12 12 0 0 1 165 1026z" fill="#38a050"/><path d="M188 1021a12 12 0 0 1-12 12l6-11z" fill="#f0c030"/><circle cx="176" cy="1021" r="6" fill="#fff"/><circle cx="176" cy="1021" r="4.500" fill="#3a80d8"/>
 <rect x="492" y="1012" width="1" height="20" fill="#2a5a76"/>
 <g fill="#dde6ec"><rect x="532" y="1011" width="1.300" height="22"/><rect x="583" y="1011" width="1.300" height="22"/><rect x="635" y="1011" width="1.300" height="22"/><rect x="665" y="1011" width="1.300" height="22"/><rect x="695" y="1011" width="1.300" height="22"/><rect x="725" y="1011" width="1.300" height="22"/><rect x="755" y="1011" width="1.300" height="22"/><rect x="785" y="1011" width="1.300" height="22"/><rect x="814" y="1011" width="1.300" height="22"/><rect x="845" y="1011" width="1.300" height="22"/><rect x="874" y="1011" width="1.300" height="22"/><rect x="993" y="1011" width="1.300" height="22"/><rect x="1023" y="1011" width="1.300" height="22"/><rect x="1053" y="1011" width="1.300" height="22"/><rect x="1083" y="1011" width="1.300" height="22"/><rect x="1135" y="1011" width="1.300" height="22"/><rect x="1165" y="1011" width="1.300" height="22"/><rect x="1195" y="1011" width="1.300" height="22"/><rect x="1225" y="1011" width="1.300" height="22"/><rect x="1277" y="1011" width="1.300" height="22"/><rect x="1307" y="1011" width="1.300" height="22"/><rect x="1347" y="1011" width="1.300" height="22"/><rect x="1377" y="1011" width="1.300" height="22"/></g>
 <path d="M510 1028l10-16 4 2-10 16z" fill="#d8a060"/><path d="M514 1016l6 10" stroke="#f0e0c0" stroke-width="1.500"/>
 <path d="M541 1013l8-2 6 14-8 3z" fill="#d86868"/><path d="M550 1027h6M553 1024v6" stroke="#6ad040" stroke-width="1.500"/>
 <rect x="562" y="1011" width="12" height="20" fill="#e8e8e8"/><path d="M564 1015h8M564 1019h8M564 1023h8M564 1027h8" stroke="#888"/>
 <path d="M592 1021l4 6 8-13" stroke="#2aa040" stroke-width="2" fill="none"/><path d="M614 1021l4 6 8-13" stroke="#d85030" stroke-width="2" fill="none"/>
 <path d="M642 1012l14 18M656 1012l-14 18" stroke="#28c850" stroke-width="3.500"/>
 <path d="M674 1030c2-8 6-15 13-18-1 8-5 15-13 18z" fill="#2a80c8"/><circle cx="680" cy="1021" r="7" fill="none" stroke="#50b858" stroke-width="1.500"/>
 <circle cx="710" cy="1021" r="8" fill="#222"/><circle cx="710" cy="1021" r="4" fill="#999"/>
 <rect x="732" y="1012" width="17" height="19" fill="#d8a860"/><rect x="732" y="1012" width="8" height="10" fill="#f0e8d8"/><rect x="738" y="1022" width="11" height="9" fill="#222"/>
 <circle cx="769" cy="1021" r="8" fill="#2a9ad6"/><path d="M764 1021l9-3.500-1.500 7.500-3-1.800-1.500 1.500z" fill="#fff"/>
 <rect x="793" y="1011" width="14" height="20" rx="3" fill="#f2ce3a"/><circle cx="800" cy="1021" r="5" fill="#fff"/>
 <circle cx="830" cy="1021" r="8" fill="#2a6a20"/><path d="M827 1016v6a3 3 0 0 0 6 0v-6" stroke="#7ae040" stroke-width="2.500" fill="none"/>
 <circle cx="861" cy="1021" r="8" fill="#708898"/><path d="M855 1017h12l-4 9h-4z" fill="#c0a870"/>
 <circle cx="890" cy="1021" r="8" fill="#e04030"/><path d="M890 1021l7 4a8 8 0 0 1-14 0z" fill="#38a050"/><path d="M890 1021h8a8 8 0 0 1-1 4z" fill="#f0c030"/><circle cx="890" cy="1021" r="4" fill="#3a80d8" stroke="#fff"/>
 <circle cx="912" cy="1021" r="8" fill="#f09020"/><path d="M906 1019a7 7 0 1 0 12-2c0 4-4 5-5 2-1 3-5 3-7 0z" fill="#e03030"/><circle cx="912" cy="1022" r="3.500" fill="#6a2a90"/>
 <circle cx="934" cy="1021" r="8" fill="#d02028"/><ellipse cx="934" cy="1021" rx="3.500" ry="6" fill="#3a1010"/>
 <circle cx="956" cy="1021" r="8" fill="none" stroke="#9a2438" stroke-width="2"/><circle cx="956" cy="1021" r="4" fill="none" stroke="#9a2438" stroke-width="1.500"/>
 <circle cx="978" cy="1021" r="8" fill="#f4f4f4"/><path d="M975 1016l3 5 3-5M978 1021v6" stroke="#e02020" stroke-width="2" fill="none"/>
 <rect x="999" y="1012" width="16" height="18" rx="4" fill="#f4f4f4"/><path d="M1011 1017c-4-2-6 1-3 4s1 5-3 4" stroke="#d82028" stroke-width="2" fill="none"/>
 <path d="M1032 1011l14 14-6 1-2 6z" fill="#e818c8"/>
 <rect x="1062" y="1011" width="12" height="20" fill="#b8ccd8"/><rect x="1064" y="1013" width="8" height="4" fill="#3a78a8"/><path d="M1064 1020h8M1064 1024h8M1064 1028h8" stroke="#3a78a8" stroke-dasharray="2 1"/>
 <path d="M1090 1032c2-10 8-18 16-21-2 9-7 16-16 21z" fill="#a878d0"/>
 <rect x="1111" y="1012" width="16" height="18" fill="none" stroke="#28a0f0" stroke-width="2" stroke-dasharray="4 1.500"/>
 <rect x="1142" y="1012" width="16" height="18" fill="#0a2a40" stroke="#2ab0e8"/><text x="1145" y="1025" font-size="9" fill="#40b8f0" font-family="Liberation Sans">Ps</text>
 <rect x="1172" y="1012" width="16" height="18" fill="#eee"/><rect x="1173" y="1015" width="14" height="14" fill="#111"/><text x="1174" y="1026" font-size="7.500" fill="#fff" font-family="Liberation Sans">C:\_</text>
 <circle cx="1211" cy="1022" r="7" fill="#13366c"/>
 <rect x="1232" y="1012" width="16" height="14" fill="#2a9ae8"/><rect x="1232" y="1026" width="16" height="3" fill="#9ac8e8"/>
 <rect x="1254" y="1012" width="16" height="18" fill="#dde4f0"/><rect x="1256" y="1014" width="8" height="6" fill="#1a50a8"/><rect x="1260" y="1021" width="8" height="7" fill="#1a50a8"/>
 <rect x="1284" y="1012" width="15" height="17" fill="#b8a8a8"/><path d="M1286 1014l5 6 6-5M1288 1026l4-5 5 5" stroke="#b82828" stroke-width="1.500" fill="none"/>
 <rect x="1315" y="1011" width="14" height="20" fill="#f0f0f0"/><path d="M1320 1015h7M1320 1020h7M1320 1025h7" stroke="#444"/><path d="M1316 1015h2M1316 1020h2M1316 1025h2" stroke="#d04040" stroke-width="1.500"/>
 <path d="M1332 1019h8l-4 5z" fill="#fff"/>
 <circle cx="1362" cy="1021" r="9" fill="#f0b020"/><circle cx="1362" cy="1021" r="5.500" fill="#f8d870" stroke="#fff"/>
 <rect x="1386" y="1014" width="12" height="16" rx="1" fill="#b4c4cc"/><rect x="1385" y="1012" width="14" height="2" fill="#dde"/><path d="M1390 1025l2-4 2 4z" fill="#1a70b8"/>
 <path d="M1634 1024l5-6 5 6" stroke="#e8e8e8" stroke-width="1.400" fill="none"/>
 <path d="M1767 1012h15v16h-5l-3 4-2-4h-5z" fill="none" stroke="#eee" stroke-width="1.300"/>
</svg>
<div class="t" style="left:1657px;top:1011px;font-size:12px;color:#e8e8e8">ENG</div>
<div class="t" style="left:1703px;top:1001px;font-size:12px;color:#e8e8e8;width:34px;text-align:center">3:40:56</div>
<div class="t" style="left:1693px;top:1021px;font-size:12px;color:#e8e8e8;width:54px;text-align:center;letter-spacing:-.25px">07.03.2026</div>

</body></html>
